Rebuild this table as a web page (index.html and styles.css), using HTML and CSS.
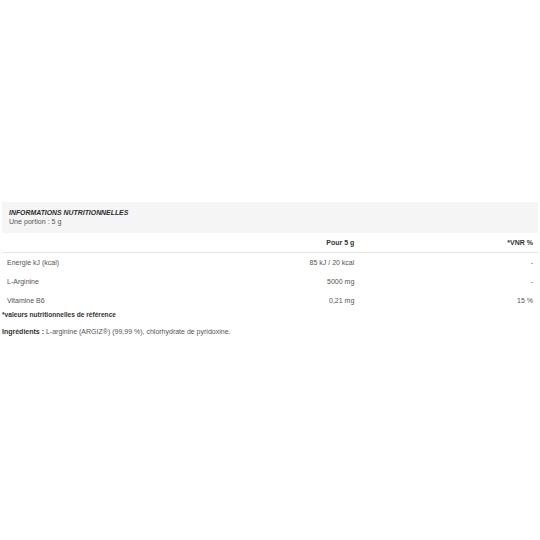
FILE: index.html
```html
<!DOCTYPE html>
<html lang="fr">
<head>
  <meta charset="UTF-8">
  <meta name="viewport" content="width=device-width, initial-scale=1">
  <title>Informations nutritionnelles</title>
  <link rel="stylesheet" href="styles.css">
</head>
<body>

<div class="container">

  <div class="nutri-head">
    <h3>Informations nutritionnelles</h3>
    <p>Une portion : 5 g</p>
  </div>

  <table class="nutri-table">
    <thead>
      <tr>
        <th></th>
        <th>Pour 5 g</th>
        <th>*VNR %</th>
      </tr>
    </thead>
    <tbody>
      <tr>
        <td>Energie kJ (kcal)</td>
        <td>85 kJ / 20 kcal</td>
        <td>-</td>
      </tr>
      <tr>
        <td>L-Arginine</td>
        <td>5000 mg</td>
        <td>-</td>
      </tr>
      <tr>
        <td>Vitamine B6</td>
        <td>0,21 mg</td>
        <td>15 %</td>
      </tr>
    </tbody>
  </table>

  <p class="note">*valeurs nutritionnelles de référence</p>

  <p class="ingredients"><strong>Ingrédients :</strong> L-arginine (ARGIZ®) (99,99 %), chlorhydrate de pyridoxine.</p>

</div>

</body>
</html>
```

FILE: styles.css
```css
body {
  font-family: 'Liberation Sans', Arial, sans-serif;
  background-color: #fff;
  margin: 0;
  color: #555;
}

.container {
  padding: 202px 2px 0;
}

.nutri-head {
  background: #f5f5f5;
  padding: 6px 7px 6px;
  height: 19px;
}

.nutri-head h3 {
  margin: 0;
  font-size: 6.9px;
  line-height: 9px;
  font-weight: bold;
  font-style: italic;
  text-transform: uppercase;
  color: #2b2b2b;
}

.nutri-head p {
  margin: 0;
  font-size: 7.1px;
  line-height: 10px;
  color: #555;
}

.nutri-table {
  width: 100%;
  border-collapse: collapse;
  table-layout: fixed;
  font-size: 7px;
}

.nutri-table th,
.nutri-table td {
  height: 19px;
  padding: 0 5px;
  text-align: right;
  vertical-align: middle;
}

.nutri-table th {
  font-weight: bold;
  color: #333;
  border-bottom: 1px solid #e6e6e6;
}

.nutri-table td:first-child {
  text-align: left;
}

.note {
  margin: 0;
  font-size: 6.6px;
  line-height: 9px;
  font-weight: bold;
  color: #333;
}

.ingredients {
  margin: 8px 0 0;
  font-size: 7px;
  line-height: 9px;
  color: #555;
}

.ingredients strong {
  color: #333;
}
```
